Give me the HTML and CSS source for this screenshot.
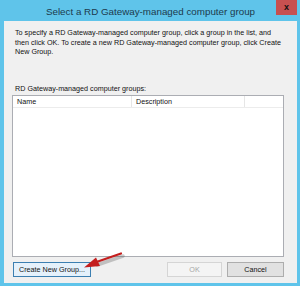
FILE: index.html
```html
<!DOCTYPE html>
<html>

<head>
    <meta charset="utf-8">
    <title>Select a RD Gateway-managed computer group</title>
    <link rel="stylesheet" href="styles.css">
</head>

<body>
    <div class="dlg">
        <div class="dlg-title">
            <span>Select a RD Gateway-managed computer group</span>
            <div class="dlg-close">x</div>
        </div>
        <div class="dlg-body">
            <div class="dlg-info">To specify a RD Gateway-managed computer group, click a group in the list, and then click OK. To create a new RD Gateway-managed computer group, click Create New Group.</div>
            <div class="dlg-label">RD Gateway-managed computer groups:</div>
            <div class="grid">
                <div class="grid-head">
                    <div class="col col-name">Name</div>
                    <div class="col col-desc">Description</div>
                    <div class="col col-rest"></div>
                </div>
            </div>
            <div class="dlg-buttons">
                <button class="btn btn-create">Create New Group...</button>
                <button class="btn btn-ok" disabled>OK</button>
                <button class="btn btn-cancel">Cancel</button>
            </div>
        </div>
        <svg class="arrow" width="300" height="286" viewBox="0 0 300 286">
            <path d="M123 256 L97 265" stroke="#555" stroke-width="3.5" opacity="0.3" stroke-linecap="round"/>
            <path d="M121 253.5 L95 262.5" stroke="#c41e1e" stroke-width="2.2" stroke-linecap="round"/>
            <polygon points="84,267.5 96,257.5 100,266" fill="#c41e1e"/>
        </svg>
    </div>
</body>

</html>
```

FILE: styles.css
```css
html,
body {
    margin: 0;
    padding: 0;
    font-family: "Liberation Sans", Arial, sans-serif;
}

.dlg {
    position: relative;
    width: 300px;
    height: 286px;
    box-sizing: border-box;
    padding: 0 3px 3px 4px;
    background: #5fc4ea;
    display: flex;
    flex-direction: column;
}

.dlg-title {
    position: relative;
    height: 21px;
    line-height: 23px;
    text-align: center;
    font-size: 9.8px;
    color: #1d3a4c;
}

.dlg-close {
    position: absolute;
    top: 0;
    right: 0;
    width: 21px;
    height: 15px;
    line-height: 14px;
    background: #c75050;
    color: #111;
    font-size: 9px;
    font-weight: bold;
}

.dlg-body {
    flex: auto;
    background: #f0f0f0;
    padding: 7px 13px 6px 8px;
    display: flex;
    flex-direction: column;
    font-size: 7.2px;
    color: #111;
}

.dlg-info {
    padding-left: 3px;
    line-height: 9.5px;
    height: 56px;
}

.dlg-label {
    padding-left: 3px;
    line-height: 9px;
    margin-bottom: 1px;
}

.grid {
    flex: auto;
    background: #fff;
    border: 1px solid #abadb3;
    margin-top: 1px;
}

.grid-head {
    display: flex;
    height: 11px;
    line-height: 11px;
    border-bottom: 1px solid #ececec;
}

.col {
    padding-left: 4px;
    border-right: 1px solid #e6e6e6;
}

.col-name {
    width: 114px;
}

.col-desc {
    width: 108px;
}

.col-rest {
    flex: auto;
    border-right: none;
}

.dlg-buttons {
    display: flex;
    margin-top: 5px;
    height: 15px;
    padding-left: 1px;
}

.btn {
    font-family: inherit;
    font-size: 7.2px;
    padding: 0;
    height: 15px;
    box-sizing: border-box;
    color: #111;
}

.btn-create {
    width: 78px;
    background: #e5f1fb;
    border: 1px solid #3c7fb1;
}

.btn-ok {
    margin-left: auto;
    width: 55px;
    background: #f4f4f4;
    border: 1px solid #d5d5d5;
    color: #a6a6a6;
}

.btn-cancel {
    margin-left: 5px;
    width: 57px;
    background: #e1e1e1;
    border: 1px solid #adadad;
}

.arrow {
    position: absolute;
    left: 0;
    top: 0;
    pointer-events: none;
}
```
